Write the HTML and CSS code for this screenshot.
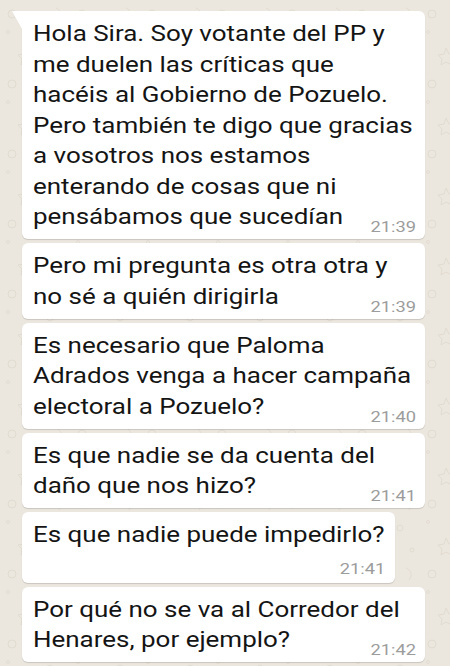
FILE: index.html
```html
<!DOCTYPE html>
<html lang="es">
<head>
<meta charset="utf-8">
<title>Chat</title>
<link rel="stylesheet" href="styles.css">
</head>
<body>
<div class="chat">
  <div class="bubble first"><div class="txt">Hola Sira. Soy votante del PP y<br>me duelen las críticas que<br>hacéis al Gobierno de Pozuelo.<br>Pero también te digo que gracias<br>a vosotros nos estamos<br>enterando de cosas que ni<br><span class="time">21:39</span>pensábamos que sucedían</div></div>
  <div class="bubble"><div class="txt">Pero mi pregunta es otra otra y<br><span class="time">21:39</span>no sé a quién dirigirla</div></div>
  <div class="bubble"><div class="txt">Es necesario que Paloma<br>Adrados venga a hacer campaña<br><span class="time">21:40</span>electoral a Pozuelo?</div></div>
  <div class="bubble"><div class="txt">Es que nadie se da cuenta del<br><span class="time">21:41</span>daño que nos hizo?</div></div>
  <div class="bubble stacked"><div class="txt">Es que nadie puede impedirlo?<span class="time">21:41</span></div></div>
  <div class="bubble"><div class="txt">Por qué no se va al Corredor del<br><span class="time">21:42</span>Henares, por ejemplo?</div></div>
</div>
</body>
</html>
```
FILE: styles.css
```css
html, body {
  margin: 0;
  padding: 0;
}
body {
  width: 450px;
  height: 666px;
  overflow: hidden;
  font-family: Roboto, "Noto Sans", sans-serif;
  background-color: #ebe6de;
  background-image: url("data:image/svg+xml,%3Csvg xmlns='http://www.w3.org/2000/svg' width='70' height='70'%3E%3Cg fill='none' stroke='%23e1dbd1' stroke-width='1'%3E%3Ccircle cx='12' cy='14' r='4'/%3E%3Ccircle cx='50' cy='38' r='3'/%3E%3Cpath d='M26 48l3 6 6 1-4 4 1 6-6-3-5 3 1-6-4-4 6-1z'/%3E%3Cpath d='M56 8c5 2 7 7 3 12'/%3E%3Ccircle cx='62' cy='60' r='2'/%3E%3Ccircle cx='8' cy='32' r='1.5'/%3E%3C/g%3E%3C/svg%3E");
}
.chat {
  display: flex;
  flex-direction: column;
  align-items: flex-start;
  gap: 4px;
  padding: 11px 0 0 22px;
}
.bubble {
  position: relative;
  display: flow-root;
  box-sizing: border-box;
  width: 403px;
  background: #fff;
  border-radius: 6px;
  box-shadow: 0 1px 1px rgba(0, 0, 0, 0.14);
  padding: 8px 9px 5px 11px;
  font-size: 22px;
  line-height: 30.5px;
  color: #141414;
}
.txt {
  display: flow-root;
  width: calc(100% / 1.18);
  white-space: nowrap;
  transform: scaleX(1.18);
  transform-origin: 0 0;
}
.bubble.first {
  border-top-left-radius: 0;
}
.bubble.first::before {
  content: "";
  position: absolute;
  left: -10px;
  top: 0;
  width: 0;
  height: 0;
  border-left: 10px solid transparent;
  border-top: 18px solid #fff;
}
.time {
  float: right;
  margin-top: 18px;
  margin-left: 10px;
  font-size: 15.5px;
  line-height: 14px;
  color: #9c9c9c;
}
.bubble.stacked {
  width: 373px;
  padding-right: 12px;
  padding-bottom: 7px;
}
.bubble.stacked .time {
  float: none;
  display: block;
  text-align: right;
  margin-top: 11px;
  margin-left: 0;
  margin-right: -2px;
}
```
